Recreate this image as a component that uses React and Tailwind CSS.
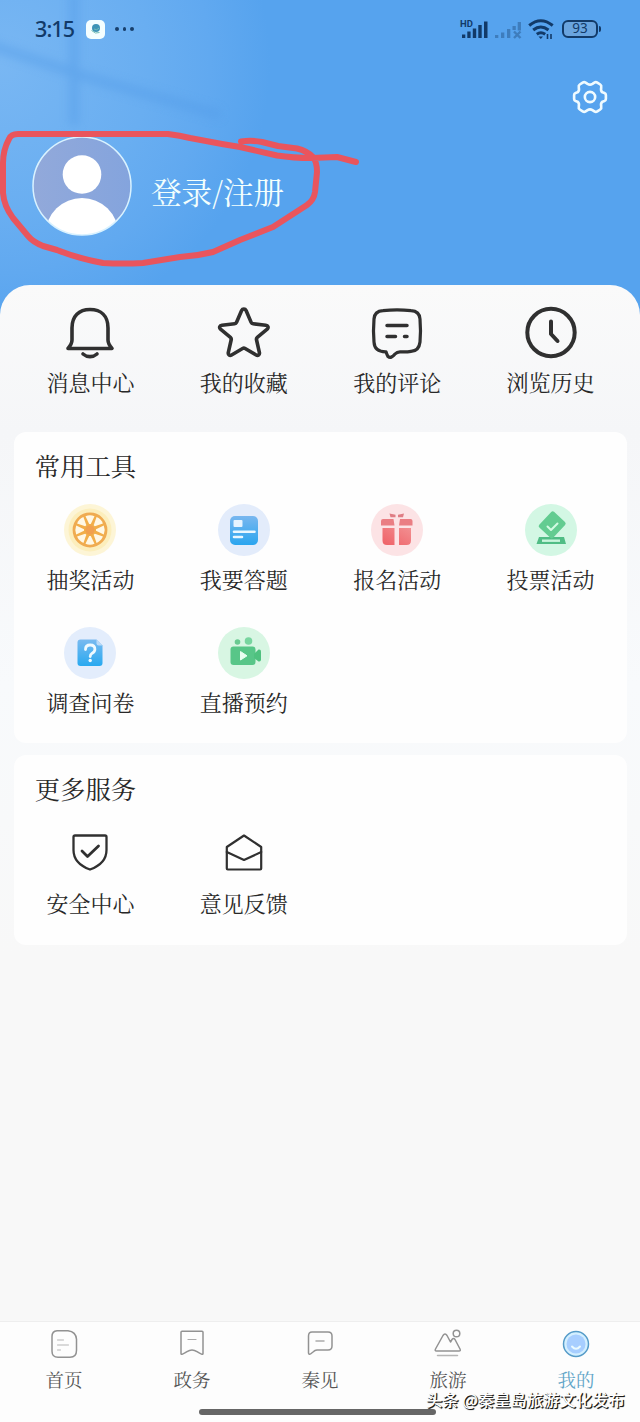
const SERIF = "font-['Noto_Serif_CJK_SC','Noto_Sans_CJK_SC',serif]";

function BellIcon() {
  return (
    <svg width="54" height="54" viewBox="0 0 54 54" fill="none" stroke="#303030" strokeWidth="3.600" strokeLinecap="round" strokeLinejoin="round">
      <path d="M9 22C9 10 16 3.500 27 3.500s18 6.500 18 18.500v12c0 3 1 5 4 8.500H5c3-3.500 4-5.500 4-8.500z" />
      <path d="M20 48c4 3.500 10 3.500 14 0" />
    </svg>
  );
}

function StarIcon() {
  return (
    <svg width="54" height="54" viewBox="-0.600 -0.200 55.500 55.500" fill="none" stroke="#303030" strokeWidth="3.700" strokeLinejoin="round">
      <path d="M24.700 4.400c1-2 3.600-2 4.600 0l5.200 12.200c.4.900 1 1.400 2 1.500l13 1.400c2.300.3 3.200 2.600 1.500 4.100L40.800 32c-.8.700-1 1.500-.8 2.500l3 13.200c.4 2.300-1.500 3.500-3.400 2.400L28.300 43.500c-.9-.5-1.700-.5-2.600 0L14.400 50.100c-1.900 1.100-3.800-.1-3.400-2.400l3-13.200c.2-1 0-1.800-.8-2.500L3 23.600c-1.700-1.500-.8-3.800 1.500-4.100l13-1.400c1-.1 1.600-.6 2-1.500z" />
    </svg>
  );
}

function CommentIcon() {
  return (
    <svg width="54" height="54" viewBox="0 0 54 54" fill="none" stroke="#303030" strokeWidth="3.200" strokeLinecap="round" strokeLinejoin="round">
      <path d="M13 4.600Q27 3 41 4.600Q49.500 5 50 13Q51 25 50 36Q49 45 41 45.400Q36 46.200 30 45.800Q27 45.800 25 48Q21 53 18 50.500Q17 49 16 45.800Q4.500 46 4 36Q3 25 4 13Q4.500 5 13 4.600z" />
      <path d="M17 19.500h20M17 30.500h8.500M34.500 30.500h2.500" strokeWidth="3.500" />
    </svg>
  );
}

function ClockIcon() {
  return (
    <svg width="54" height="54" viewBox="0 0 54 54" fill="none" stroke="#303030" strokeWidth="4" strokeLinecap="round" strokeLinejoin="round">
      <circle cx="27" cy="26.500" r="23.700" />
      <path d="M27 15.500v12.500l6.500 7" />
    </svg>
  );
}

function WheelIcon() {
  return (
    <svg width="52" height="52" viewBox="0 0 52 52">
      <circle cx="26" cy="26" r="26" fill="#fdf5d6" />
      <circle cx="26" cy="26" r="21.500" fill="#fceebc" />
      <circle cx="26" cy="26" r="16.200" fill="#f2ae4a" stroke="#efab52" strokeWidth="2.400" />
      {[0, 45, 90, 135, 180, 225, 270, 315].map((angle) => (
        <path key={angle} d="M25.200 20l-3.700-7.800q4.500-1.800 9 0L26.800 20z" fill="#fff8e6" transform={`rotate(${angle} 26 26)`} />
      ))}
      <circle cx="26" cy="26" r="4.500" fill="#f1a04f" />
    </svg>
  );
}

function AnswerIcon() {
  return (
    <svg width="52" height="52" viewBox="0 0 52 52">
      <defs>
        <linearGradient id="answer" x1="0" y1="0" x2="0" y2="1">
          <stop stopColor="#79b7ef" />
          <stop offset="1" stopColor="#2aa5ef" />
        </linearGradient>
      </defs>
      <circle cx="26" cy="26" r="26" fill="#e3ecfb" />
      <rect x="12" y="12" width="28" height="29" rx="5" fill="url(#answer)" />
      <rect x="15.500" y="16" width="9" height="7" rx="1" fill="#e6f4ff" />
      <path d="M16 27.700h20.500M16 33h8" stroke="#eaf7ff" strokeWidth="2.600" strokeLinecap="round" />
    </svg>
  );
}

function GiftIcon() {
  return (
    <svg width="52" height="52" viewBox="0 0 52 52">
      <defs>
        <linearGradient id="gift" x1="0" y1="1" x2="1" y2="0">
          <stop stopColor="#ef6066" />
          <stop offset="1" stopColor="#f28f91" />
        </linearGradient>
      </defs>
      <circle cx="26" cy="26" r="26" fill="#fce3e5" />
      <path d="M18.500 9.500l6 1.200v2.500h-5zM33 9.500l-6 1.200v2.500h5z" fill="#df7d84" />
      <path d="M10 17q0-2 2-2h10.500l1 6.500H10zM29 15h10.500q2 0 2 2v4.500H28z" fill="#ea7e83" />
      <path d="M11.500 24H23.500v17H16q-4.500 0-4.500-4.500zM28 24h12v12.500q0 4.500-4.500 4.500H28z" fill="url(#gift)" />
    </svg>
  );
}

function VoteIcon() {
  return (
    <svg width="52" height="52" viewBox="0 0 52 52">
      <circle cx="26" cy="26" r="26" fill="#d3f7e4" />
      <path d="M14 33h25l2 7H11.500z" fill="#50bd85" />
      <path d="M17 36.700h18" stroke="#c9f5dc" strokeWidth="2.400" />
      <rect x="17.500" y="10" width="19" height="21.500" rx="2" fill="#63cc91" transform="rotate(43 27 21)" />
      <path d="M22.500 22.500l3.500 3.500 6.500-6.500" fill="none" stroke="#d3fbe3" strokeWidth="2" strokeLinecap="round" strokeLinejoin="round" />
    </svg>
  );
}

function SurveyIcon() {
  return (
    <svg width="52" height="52" viewBox="0 0 52 52">
      <defs>
        <linearGradient id="survey" x1="0" y1="0" x2="0" y2="1">
          <stop stopColor="#79baf0" />
          <stop offset="1" stopColor="#28a9f0" />
        </linearGradient>
      </defs>
      <circle cx="26" cy="26" r="26" fill="#e3edfc" />
      <path d="M16.500 12.500h16l6 6V36q0 3-3 3h-19q-3 0-3-3V15.500q0-3 3-3z" fill="url(#survey)" />
      <path d="M32.500 12.500v4q0 2 2 2h4z" fill="#b9d9f8" />
      <path d="M21.500 22.500q0-4.500 4.700-4.500t4.700 4.200q0 2.500-2.700 4-2 1.300-2 3.300" fill="none" stroke="#effaff" strokeWidth="2.800" strokeLinecap="round" />
      <circle cx="26.200" cy="33.500" r="1.700" fill="#effaff" />
    </svg>
  );
}

function LiveIcon() {
  return (
    <svg width="52" height="52" viewBox="0 0 52 52">
      <circle cx="26" cy="26" r="26" fill="#d8f6e3" />
      <circle cx="19.500" cy="15" r="2.800" fill="#69ca91" />
      <circle cx="30.500" cy="14" r="3.800" fill="#78d59f" />
      <rect x="12.500" y="19.500" width="25" height="18.500" rx="3" fill="#58c688" />
      <path d="M36 27l4.500-4.500q2.500-.5 2.500 2v8q0 2.500-2.500 2L36 31z" fill="#4fc17f" />
      <path d="M22.500 24.500V33l6.500-4.200z" fill="#eafff2" stroke="#eafff2" strokeLinejoin="round" />
    </svg>
  );
}

function ShieldIcon() {
  return (
    <svg width="40" height="40" viewBox="0 0 40 40" fill="none" stroke="#303030" strokeWidth="2.300" strokeLinecap="round" strokeLinejoin="round">
      <path d="M5 2.500h30q1.500 0 1.500 1.500v13q0 13.500-16.500 19.500Q3.500 30.500 3.500 17V4q0-1.500 1.500-1.500z" />
      <path d="M12 18l5.500 5.500L28.500 13" strokeWidth="2.800" />
    </svg>
  );
}

function MailIcon() {
  return (
    <svg width="40" height="40" viewBox="0 0 40 40" fill="none" stroke="#303030" strokeWidth="2.200" strokeLinecap="round" strokeLinejoin="round">
      <path d="M2.800 14L20 2.500 37.200 14v21.500q0 1-1 1H3.800q-1 0-1-1z" />
      <path d="M2.800 19L20 27l17.200-8" />
    </svg>
  );
}

function TabIcon({ name }) {
  return (
    <svg width="28" height="30" viewBox="0 0 28 30" fill="none" stroke="#929292" strokeWidth="1.500" strokeLinecap="round" strokeLinejoin="round">
      {name === "home" && (
        <>
          <path d="M7 1.700h11q8 1 8.500 8.500v11q0 7-6.500 7H8q-6 0-6-6V7.500Q2 2 7 1.700z" />
          <path d="M7.500 11h6M7.500 16h11M7.500 21h3" stroke="#b5b5b5" strokeWidth="1" />
        </>
      )}
      {name === "gov" && (
        <>
          <path d="M4 2.300h20q1 0 1 1v21.200q0 1.300-1.500.6-2.500-1-4.500-2.400-5-3.500-10 0-2 1.400-4.500 2.400-1.500.7-1.500-.6V3.300q0-1 1-1z" />
          <path d="M10 10.500h8" stroke="#aaaaaa" strokeWidth="1.200" />
        </>
      )}
      {name === "qin" && (
        <>
          <path d="M6 3h16q4 0 4 4v10q0 4-4 4H11q-2 0-4 2l-2.500 2Q3 26 2.500 24V7q0-4 3.500-4z" />
          <path d="M10 12h8" stroke="#aaaaaa" />
        </>
      )}
      {name === "travel" && (
        <>
          <path d="M2.500 22q-2 0-1-2L9 6.500q2-3 4 0l3.500 6.500 1.500-2.500q1.500-2 3 0l5 9.500q1 2-1 2z" />
          <circle cx="22.500" cy="4.500" r="3.300" />
          <path d="M3.500 26.500h20" stroke="#b5b5b5" />
        </>
      )}
      {name === "mine" && (
        <>
          <circle cx="14" cy="15" r="12.500" fill="#d3efff" stroke="#559bc8" />
          <circle cx="14" cy="15" r="9.500" fill="#a7ceff" stroke="none" />
          <path d="M10 17.500q4 4.500 8 0" stroke="#eafaff" strokeWidth="2" />
        </>
      )}
    </svg>
  );
}

const quickLinks = [
  { label: "消息中心", Icon: BellIcon },
  { label: "我的收藏", Icon: StarIcon },
  { label: "我的评论", Icon: CommentIcon },
  { label: "浏览历史", Icon: ClockIcon },
];

const tools = [
  { label: "抽奖活动", Icon: WheelIcon },
  { label: "我要答题", Icon: AnswerIcon },
  { label: "报名活动", Icon: GiftIcon },
  { label: "投票活动", Icon: VoteIcon },
  { label: "调查问卷", Icon: SurveyIcon },
  { label: "直播预约", Icon: LiveIcon },
];

const services = [
  { label: "安全中心", Icon: ShieldIcon },
  { label: "意见反馈", Icon: MailIcon },
];

const tabs = [
  { name: "home", label: "首页" },
  { name: "gov", label: "政务" },
  { name: "qin", label: "秦见" },
  { name: "travel", label: "旅游" },
  { name: "mine", label: "我的" },
];

function StatusBar() {
  return (
    <div className="flex h-[58px] items-center justify-between pr-[39px] pl-[35px] text-[#123a68]">
      <div className="flex items-center">
        <span className="w-[40px] font-['Noto_Sans',sans-serif] text-[21.500px] leading-none font-medium tracking-[-0.900px] whitespace-nowrap">3:15</span>
        <span className="ml-[11px] flex h-[19px] w-[19px] items-center justify-center rounded-[5px] bg-[#f4feff]">
          <svg width="12" height="12" viewBox="0 0 12 12">
            <circle cx="6" cy="5" r="4" fill="#3e94b6" />
            <path d="M1.500 7.500q4 4 8 2M4 6q3 2 5-1" fill="none" stroke="#72bdb6" />
          </svg>
        </span>
        <span className="ml-[10px] flex gap-[4px]">
          <i className="h-[3.500px] w-[3.500px] rounded-full bg-[#183f6c]" />
          <i className="h-[3.500px] w-[3.500px] rounded-full bg-[#183f6c]" />
          <i className="h-[3.500px] w-[3.500px] rounded-full bg-[#183f6c]" />
        </span>
      </div>
      <div className="flex items-center">
        <div className="relative h-[20px] w-[29px]">
          <span className="absolute top-0 left-0 font-['Roboto',sans-serif] text-[9.500px] leading-none font-bold">HD</span>
          <svg width="29" height="20" viewBox="0 0 29 20" fill="#123a68">
            <path d="M2 15.500h3.300V19H2zM7.300 12.500h3.300V19H7.300zM12.800 9.500h3.400V19h-3.400zM18.300 6h3.400v13h-3.400zM24 2.500h3.500V19H24z" />
          </svg>
        </div>
        <svg className="ml-[6px]" width="27" height="20" viewBox="0 0 27 20" fill="#3e7dbd">
          <path d="M0 16h3.300v3H0zM6 13.500h3.300V19H6zM12 10h3.300v9H12zM17.500 7h3.300v4h-3.300zM22.700 3H26v8.500h-3.300z" />
          <path d="M19 12.500l6.500 6.500M25.500 12.500L19 19" stroke="#3e7dbd" strokeWidth="2.400" />
        </svg>
        <svg className="ml-[6px]" width="27" height="21" viewBox="0 0 27 21" fill="none" stroke="#123a68" strokeWidth="3">
          <path d="M1.200 6.500q11.500-9.500 23.500 0M5.200 11q7.500-6 15.300 0M8.800 15.200q4-3 8.400 0" />
          <path d="M10.500 17.500h4.500L12.800 20z" fill="#123a68" stroke="none" />
          <path d="M19.500 15v5M23 20v-5" strokeWidth="1.600" />
        </svg>
        <div className="ml-[7px] flex h-[18px] w-[36px] items-center justify-center rounded-[6px] border-2 border-[#123a68] bg-[#69a4df] font-['Noto_Sans',sans-serif] text-[13.500px] leading-none">
          93
        </div>
        <div className="ml-[1px] h-[6px] w-[2px] rounded-r bg-[#123a68]" />
      </div>
    </div>
  );
}

function Profile() {
  return (
    <header className="relative h-[316px] bg-[radial-gradient(circle_at_0_20%,#79b7f3_0,#69aef1_150px,#61a9f0_210px,#56a3ee_270px)]">
      {/* window light behind the profile */}
      <svg className="absolute inset-0" width="640" height="300" viewBox="0 0 640 300">
        <defs>
          <filter id="soft"><feGaussianBlur stdDeviation="5" /></filter>
        </defs>
        <g filter="url(#soft)" fill="none" stroke="#529be7" strokeWidth="9" opacity=".5">
          <path d="M-10 45L90 78 220 115M74-10v135" />
        </g>
      </svg>
      <div className="relative">
        <StatusBar />
        <div className="flex justify-end pt-[20px] pr-[31px]">
          <svg width="38" height="38" viewBox="-0.500 -0.500 39 39" fill="none" stroke="#f0fbff" strokeWidth="2.700" strokeLinejoin="round">
            <path d="M11.500 4.200q1.500-1 3 0l2 1.300q2.500 1.500 5 0l2-1.300q1.500-1 3 0l3 2q1.500 1 1 3-.8 3.500 1.300 5l2 .7q1.500.6 1.500 2v4.200q0 1.400-1.500 2l-2 .7q-2.100 1.500-1.300 5 .5 2-1 3l-3 2q-1.500 1-3 0l-2-1.300q-2.500-1.500-5 0l-2 1.300q-1.500 1-3 0l-3-2q-1.500-1-1-3 .8-3.500-1.300-5l-2-.7q-1.500-.6-1.500-2v-4.200q0-1.400 1.500-2l2-.7q2.100-1.500 1.300-5-.5-2 1-3z" />
            <circle cx="19" cy="19" r="5.300" />
          </svg>
        </div>
        <div className="flex items-center pt-[20px] pl-[32px]">
          <svg width="100" height="100" viewBox="0 0 100 100">
            <defs>
              <clipPath id="face"><circle cx="50" cy="50" r="49" /></clipPath>
              <linearGradient id="avatar" x1="0" y1="0" x2="1" y2="0">
                <stop stopColor="#92a9da" />
                <stop offset="1" stopColor="#84a4dd" />
              </linearGradient>
            </defs>
            <circle cx="50" cy="50" r="49" fill="url(#avatar)" />
            <g clipPath="url(#face)" fill="#fff">
              <circle cx="50" cy="38.500" r="19.300" />
              <ellipse cx="50" cy="97" rx="36" ry="35" />
            </g>
            <circle cx="50" cy="50" r="49" fill="none" stroke="#d9f2ff" strokeWidth="1.500" />
          </svg>
          <h1 className={`${SERIF} mt-[10px] ml-[19px] text-[30.600px] leading-[40px] font-normal text-[#f3fffd]`}>登录/注册</h1>
        </div>
      </div>
      {/* hand-drawn highlight */}
      <svg className="absolute inset-0" width="640" height="300" viewBox="0 0 640 300" fill="none" stroke="#e9555d" strokeWidth="6" strokeLinecap="round" strokeLinejoin="round">
        <path d="M241 141.500Q252 140 262 142L278 146 297 148.500Q307 151 313 157 317 162 317 172L315 192Q314 200 307 205L273 227 240 240 213 252Q197 256 180 257L143 263Q123 264 103 263 80 259 57 250L43 246Q33 242 28 236L13 218Q4 206 3 193V163Q3 150 9 139 11 134 18 134H168Q180 135.500 190 138L222 144 240 147 277 155.500Q293 158 312 158L337 157 356 162" />
      </svg>
    </header>
  );
}

function Section({ title, items, className, rowClass }) {
  return (
    <section className={`rounded-[12px] bg-[#fefefe] ${className}`}>
      <h2 className="pt-[16px] pl-[21px] text-[25.400px] leading-[34px] font-normal">{title}</h2>
      <div className={`grid grid-cols-4 ${rowClass}`}>
        {items.map(({ label, Icon }) => (
          <button key={label} type="button" className="flex flex-col items-center">
            <Icon />
            <span className="text-[22px] leading-[30px] font-normal">{label}</span>
          </button>
        ))}
      </div>
    </section>
  );
}

export default function App() {
  return (
    <div className={`${SERIF} flex h-[1422px] w-[640px] flex-col overflow-hidden bg-[#f8f8f8] text-[#282828]`}>
      <Profile />
      <main className="relative -mt-[31px] flex-1 rounded-t-[30px] bg-[linear-gradient(#fafafa_0,#f5f6f8_147px,#f8fafc_400px,#f8f8f8_670px)] pt-[21px] pr-[12.700px] pl-[13.700px]">
        <nav className="grid h-[126px] grid-cols-4">
          {quickLinks.map(({ label, Icon }) => (
            <button key={label} type="button" className="flex flex-col items-center">
              <Icon />
              <span className="mt-[7px] text-[22px] leading-[30px] font-normal">{label}</span>
            </button>
          ))}
        </nav>
        <Section title="常用工具" items={tools} className="h-[311px]" rowClass="gap-y-[33px] pt-[22px] [&>button]:gap-[8px]" />
        <Section title="更多服务" items={services} className="mt-[12px] h-[190px]" rowClass="pt-[28px] [&>button]:gap-[15px]" />
      </main>
      <footer className="relative h-[101px] border-t border-[#eeeeee] bg-[#fdfdfd]">
        <nav className="grid grid-cols-5 pt-[7px]">
          {tabs.map((tab) => (
            <button key={tab.name} type="button" className={`flex flex-col items-center ${tab.name === "mine" ? "text-[#61a5c8]" : "text-[#555555]"}`}>
              <TabIcon name={tab.name} />
              <span className="mt-[10px] text-[18.500px] leading-[20px] font-normal">{tab.label}</span>
            </button>
          ))}
        </nav>
        <div className="absolute top-[87px] left-[199px] h-[6px] w-[237px] rounded-full bg-[#666666]" />
        <p className="absolute top-[68px] left-[426px] font-['Noto_Sans_CJK_SC',sans-serif] text-[16.300px] leading-[18px] font-medium whitespace-nowrap text-white [text-shadow:1px_1px_0_#1c1c1c,1px_1px_1px_#1c1c1c]">
          头条 @秦皇岛旅游文化发布
        </p>
      </footer>
    </div>
  );
}
